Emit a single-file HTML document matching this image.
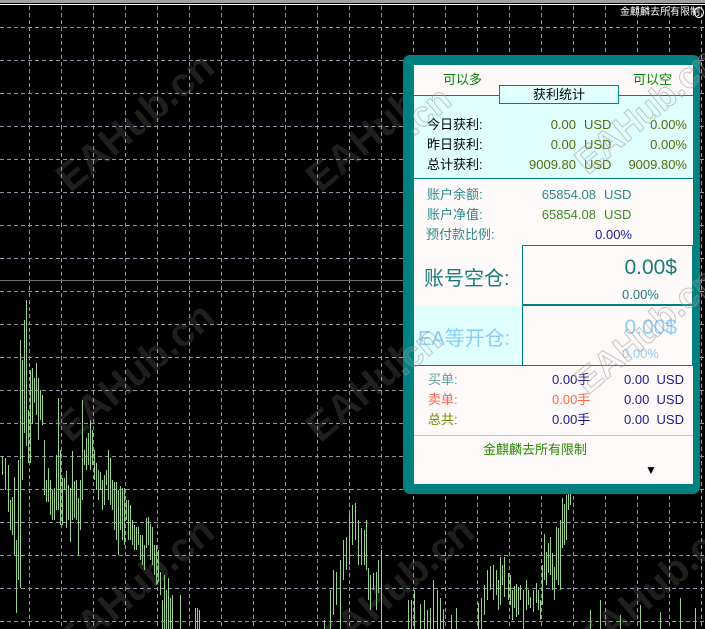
<!DOCTYPE html>
<html style="width:705px;height:629px;overflow:hidden"><head><meta charset="utf-8"><style>
*{margin:0;padding:0;box-sizing:border-box}
body{width:705px;height:629px;background:#000;overflow:hidden;font-family:"Liberation Sans","Noto Sans CJK SC",sans-serif}
#root{position:relative;width:705px;height:629px;overflow:hidden;background:#000}
.a{position:absolute;white-space:nowrap;font-size:13px;line-height:16px}
.r{text-align:right}
.wm{position:absolute;font:bold 40px "Liberation Sans",sans-serif;color:rgba(140,140,140,0.22);transform:rotate(-40deg);white-space:nowrap}
.wm2{position:absolute;font:bold 40px "Liberation Sans",sans-serif;color:rgba(255,255,255,0.1);-webkit-text-stroke:1px rgba(150,150,150,0.55);transform:rotate(-40deg);white-space:nowrap}
</style></head><body><div id="root">
<div style="position:absolute;left:0;top:0;width:705px;height:3px;background:#a0a0a0"></div>
<div style="position:absolute;left:0;top:4px;width:705px;height:1px;background:#fff"></div>
<svg style="position:absolute;left:0;top:0" width="705" height="629">
<g stroke="#8a97a8" stroke-width="1" stroke-dasharray="4,3">
<path d="M29.5 6V629M61.5 6V629M93.5 6V629M125.5 6V629M157.5 6V629M189.5 6V629M221.5 6V629M253.5 6V629M285.5 6V629M317.5 6V629M349.5 6V629M381.5 6V629M413.5 6V629M445.5 6V629M477.5 6V629M509.5 6V629M541.5 6V629M573.5 6V629M605.5 6V629M637.5 6V629M669.5 6V629M701.5 6V629"/>
<path d="M0 27.5H705M0 60.5H705M0 93.5H705M0 126.5H705M0 159.5H705M0 192.5H705M0 225.5H705M0 258.5H705M0 291.5H705M0 324.5H705M0 357.5H705M0 390.5H705M0 423.5H705M0 456.5H705M0 489.5H705M0 522.5H705M0 555.5H705M0 588.5H705M0 621.5H705"/>
</g>
<path d="M0 280.5H705" stroke="#707070"/>
<g stroke="#9ad090" stroke-width="1" transform="translate(0.5,0)">
<path d="M2 456V475M5 458V490M8 465V512M10 500V530M12 497V535M14 477V555M16 540V613M18 460V580M20 340V588M22 360V480M24 320V433M26 300V446M28 410V463M30 370V463M32 368V424M34 378V403M36 363V415M38 378V440M40 390V420M42 395V425M44 440V495M46 480V502M48 468V502M50 480V515M52 490V520M54 488V520M56 455V510M58 398V510M60 450V525M62 478V525M64 478V490M66 471V528M68 485V520M70 488V542M72 451V520M74 481V518M76 480V520M78 498V555M80 480V530M82 400V500M84 450V465M86 438V470M88 433V465M90 420V470M92 430V465M94 450V480M96 463V490M98 470V500M100 472V490M102 480V510M104 475V505M106 470V485M108 450V500M110 458V505M112 480V510M114 482V530M116 482V540M118 490V555M120 486V530M122 488V540M124 488V545M126 500V520M128 500V540M130 505V540M132 520V545M134 525V550M136 527V550M138 527V545M140 535V560M142 535V565M144 545V570M146 518V548M148 517V545M150 524V560M152 527V565M154 545V575M156 545V585M158 550V582M160 572V595M162 600V629M164 575V629M166 590V629M168 578V629M170 598V629M172 595V629M180 595V629M195 608V629M197 608V629M199 610V629"/>
<path d="M324 620V629M330 590V629M333 570V615M336 572V605M340 560V629M343 540V580M346 537V570M349 513V565M352 505V545M355 503V540M358 520V565M361 528V565M364 530V565M366 520V570M368 568V600M370 575V610M373 573V590M376 572V610M378 560V593M381 550V629M408 600V629M411 600V629M414 590V629M420 604V629M424 600V629M427 610V629M430 608V629M433 580V629M437 590V629M440 598V629M443 609V629M451 615V629M456 608V629M478 603V629M481 598V629M484 585V615M487 570V600M490 566V590M493 565V600M496 570V595M498 580V610M500 557V605M502 565V585M504 557V597M508 573V600M510 575V605M512 590V620M514 586V608M516 584V617M518 587V615M520 585V600M523 590V629M526 580V610M528 590V605M530 597V608M533 590V612M536 583V603M538 590V610M540 600V620M542 565V605M544 534V580M546 552V585M548 543V573M550 537V575M552 553V590M554 567V600M556 527V580M558 528V585M560 520V590M562 498V548M564 504V545M566 495V540M568 490V510M570 490V505"/>
<path d="M590 610V629M600 600V629M620 615V629M640 605V629M660 612V629M680 598V629M695 608V629"/>
</g>
</svg>
<div class="a" style="left:620px;top:7px;font-size:10px;line-height:12px;color:#fff">金麒麟去所有限制</div>
<div style="position:absolute;left:694px;top:7px;width:10px;height:11px;border:1px solid #fff;border-radius:50%"></div>

<div class="wm" style="left:40px;top:100px">EAHub.cn</div>
<div class="wm" style="left:290px;top:100px">EAHub.cn</div>
<div class="wm" style="left:40px;top:350px">EAHub.cn</div>
<div class="wm" style="left:290px;top:350px">EAHub.cn</div>
<div class="wm" style="left:40px;top:565px">EAHub.cn</div>
<div class="wm" style="left:300px;top:565px">EAHub.cn</div>
<div class="wm" style="left:560px;top:565px">EAHub.cn</div>

<div style="position:absolute;left:403px;top:55px;width:297px;height:439px;background:#008080;border-radius:7px"></div>
<div style="position:absolute;left:414px;top:65px;width:279px;height:419px;background:#fffafa"></div>
<div style="position:absolute;left:414px;top:95px;width:279px;height:84px;background:#e0ffff;border-top:1px solid #008080;border-bottom:1px solid #008080"></div>
<div style="position:absolute;left:499px;top:85px;width:120px;height:19px;background:#e0ffff;border:1px solid #008080;text-align:center;font-size:13px;line-height:17px;color:#000">获利统计</div>
<div class="a" style="left:443px;top:72px;color:#008000">可以多</div>
<div class="a" style="left:633px;top:72px;color:#008000">可以空</div>

<div class="a" style="left:427px;top:117px;color:#000">今日获利:</div>
<div class="a" style="left:427px;top:137px;color:#000">昨日获利:</div>
<div class="a" style="left:427px;top:157px;color:#000">总计获利:</div>
<div class="a r" style="left:500px;width:76px;top:117px;color:#556b00">0.00</div>
<div class="a r" style="left:500px;width:76px;top:137px;color:#556b00">0.00</div>
<div class="a r" style="left:500px;width:76px;top:157px;color:#556b00">9009.80</div>
<div class="a" style="left:584px;top:117px;color:#556b00">USD</div>
<div class="a" style="left:584px;top:137px;color:#556b00">USD</div>
<div class="a" style="left:584px;top:157px;color:#556b00">USD</div>
<div class="a r" style="left:600px;width:87px;top:117px;color:#556b00">0.00%</div>
<div class="a r" style="left:600px;width:87px;top:137px;color:#556b00">0.00%</div>
<div class="a r" style="left:600px;width:87px;top:157px;color:#556b00">9009.80%</div>

<div class="a" style="left:427px;top:187px;color:#2a8a8a">账户余额:</div>
<div class="a" style="left:427px;top:207px;color:#2a8a8a">账户净值:</div>
<div class="a" style="left:426px;top:227px;color:#2a8a8a">预付款比例:</div>
<div class="a r" style="left:520px;width:76px;top:187px;color:#2a8a8a">65854.08</div>
<div class="a r" style="left:520px;width:76px;top:207px;color:#3a8a20">65854.08</div>
<div class="a" style="left:604px;top:187px;color:#2a8a8a">USD</div>
<div class="a" style="left:604px;top:207px;color:#3a8a20">USD</div>
<div class="a r" style="left:560px;width:72px;top:227px;color:#1a1a9a">0.00%</div>

<div style="position:absolute;left:414px;top:305px;width:108px;height:60px;background:#e0ffff"></div>
<div style="position:absolute;left:522px;top:245px;width:171px;height:61px;border:1px solid #008080;border-bottom-width:2px"></div>
<div style="position:absolute;left:522px;top:305px;width:171px;height:61px;border-left:1px solid #008080;border-right:1px solid #008080"></div>
<div style="position:absolute;left:414px;top:365px;width:279px;height:1px;background:#008080"></div>
<div class="a" style="left:424px;top:267px;font-size:20px;line-height:24px;color:#1a7a7a">账号空仓:</div>
<div class="a r" style="left:580px;width:97px;top:256px;font-size:21px;line-height:24px;color:#1a7a7a">0.00$</div>
<div class="a" style="left:622px;top:287px;color:#1a7a7a">0.00%</div>
<div class="a" style="left:418px;top:327px;font-size:20px;line-height:24px;color:#87cefa">EA等开仓:</div>
<div class="a r" style="left:580px;width:97px;top:316px;font-size:21px;line-height:24px;color:#87cefa">0.00$</div>
<div class="a" style="left:622px;top:346px;color:#87cefa">0.00%</div>

<div class="a" style="left:428px;top:372px;color:#5f9ea0">买单:</div>
<div class="a" style="left:428px;top:392px;color:#ff6347">卖单:</div>
<div class="a" style="left:428px;top:412px;color:#6b8e00">总共:</div>
<div class="a" style="left:552px;top:372px;color:#1a1a8a">0.00手</div>
<div class="a" style="left:552px;top:392px;color:#ff6347">0.00手</div>
<div class="a" style="left:552px;top:412px;color:#1a1a8a">0.00手</div>
<div class="a" style="left:624px;top:372px;color:#1a1a8a">0.00&nbsp;&nbsp;USD</div>
<div class="a" style="left:624px;top:392px;color:#1a1a8a">0.00&nbsp;&nbsp;USD</div>
<div class="a" style="left:624px;top:412px;color:#1a1a8a">0.00&nbsp;&nbsp;USD</div>
<div style="position:absolute;left:414px;top:435px;width:279px;height:1px;background:#a0d0e0"></div>
<div class="a" style="left:483px;top:442px;color:#2a8a00">金麒麟去所有限制</div>
<div class="a" style="left:645px;top:462px;color:#000;font-size:12px">▼</div>

<div class="wm2" style="left:400px;top:90px;font-size:36px">.cn</div>
<div class="wm2" style="left:560px;top:90px;font-size:36px">EAHub.cn</div>
<div class="wm2" style="left:390px;top:330px;font-size:36px">.cn</div>
<div class="wm2" style="left:560px;top:310px;font-size:36px">EAHub.cn</div>
</div></body></html>
